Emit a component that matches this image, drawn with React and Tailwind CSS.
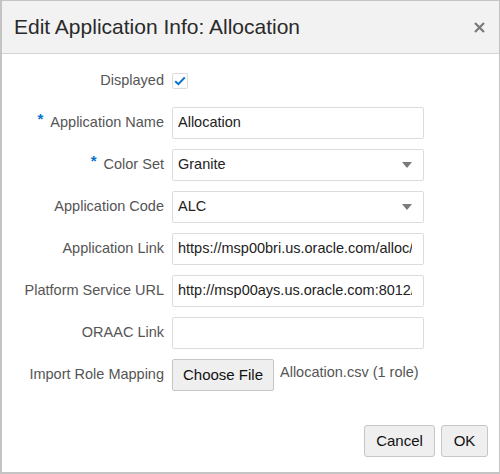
import React from "react";

const font = { fontFamily: '"Liberation Sans", Arial, sans-serif' };

const Caret = () => (
  <svg width="10" height="6" viewBox="0 0 10 6" className="shrink-0">
    <path d="M0 0 L10 0 L5 6 Z" fill="#7a7a7a" />
  </svg>
);

const Label = ({ children, required }) => (
  <div className="flex items-center justify-end text-[14.5px] text-[#555555]">
    {required && (
      <span className="mr-[7px] -mt-[8px] text-[15px] font-bold text-[#0572ce]">*</span>
    )}
    <span>{children}</span>
  </div>
);

const TextInput = ({ value, select }) => (
  <div className="flex h-[32px] w-[252px] items-center overflow-hidden rounded-[2px] border border-[#dcdcdc] bg-white pl-[5px] pr-[11px] text-[14.5px] text-[#222222]">
    <span className="flex-1 overflow-hidden whitespace-nowrap">{value}</span>
    {select && <Caret />}
  </div>
);

export default function App() {
  const rows = [
    { label: "Application Name", value: "Allocation", required: true },
    { label: "Color Set", value: "Granite", required: true, select: true },
    { label: "Application Code", value: "ALC", select: true },
    { label: "Application Link", value: "https://msp00bri.us.oracle.com/alloc/" },
    { label: "Platform Service URL", value: "http://msp00ays.us.oracle.com:8012/" },
    { label: "ORAAC Link", value: "" },
  ];

  return (
    <div
      style={font}
      className="flex h-[474px] w-[500px] flex-col border-t border-r border-l-2 border-b-2 border-[#c4c4c4] bg-white"
    >
      <div className="flex h-[53px] items-center justify-between border-b border-[#d4d4d4] bg-[#f2f2f2] pl-[12px] pr-[14px]">
        <h1 className="text-[21px] text-[#2a2a2a]">Edit Application Info: Allocation</h1>
        <svg width="11" height="11" viewBox="0 0 11 11">
          <path d="M1 1 L10 10 M10 1 L1 10" stroke="#7a7a7a" strokeWidth="2.2" />
        </svg>
      </div>

      <div className="grid grid-cols-[162px_auto] content-start gap-x-[8px] gap-y-[10px] pt-[11px]">
        <Label>Displayed</Label>
        <div className="flex h-[32px] items-center">
          <div className="flex h-[16px] w-[16px] items-center justify-center rounded-[2px] border border-[#dcdcdc] bg-white">
            <svg width="12" height="10" viewBox="0 0 12 10">
              <path d="M1.2 5.2 L4.4 8.2 L10.8 1.4" fill="none" stroke="#0572ce" strokeWidth="2" />
            </svg>
          </div>
        </div>

        {rows.map((r) => (
          <React.Fragment key={r.label}>
            <Label required={r.required}>{r.label}</Label>
            <TextInput value={r.value} select={r.select} />
          </React.Fragment>
        ))}

        <Label>Import Role Mapping</Label>
        <div className="flex items-center gap-[6px]">
          <button className="h-[32px] w-[102px] rounded-[2px] border border-[#c6c6c6] bg-[#efefef] text-[15px] text-[#111111]">
            Choose File
          </button>
          <span className="-mt-[4px] text-[14.5px] text-[#555555]">Allocation.csv (1 role)</span>
        </div>
      </div>

      <div className="mt-auto flex justify-end gap-[6px] pb-[15px] pr-[11px]">
        <button className="h-[32px] w-[71px] rounded-[3px] border border-[#c6c6c6] bg-[#efefef] text-[15px] text-[#111111]">
          Cancel
        </button>
        <button className="h-[32px] w-[47px] rounded-[3px] border border-[#c6c6c6] bg-[#efefef] text-[15px] text-[#111111]">
          OK
        </button>
      </div>
    </div>
  );
}
